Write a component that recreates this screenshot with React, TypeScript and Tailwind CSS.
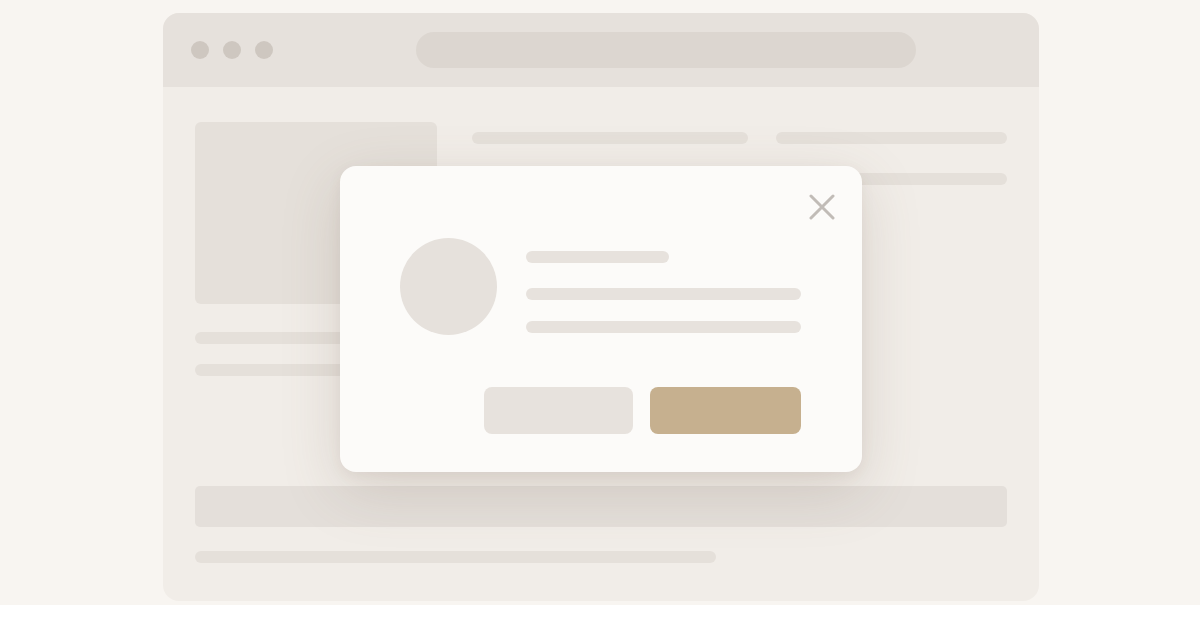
import React from "react";

export default function App() {
  return (
    <div className="w-[1200px] h-[617px] bg-white overflow-hidden" style={{ fontFamily: "'Liberation Sans', sans-serif" }}>
      <div className="h-[605px] bg-[#f8f5f1] pt-[13px] pl-[163px]">
        <div className="relative w-[876px] h-[588px] rounded-[16px] bg-[#f1ede8] overflow-visible">
          {/* header */}
          <div className="h-[74px] bg-[#e6e1dc] rounded-t-[16px] flex items-center pl-[28px]">
            <div className="flex gap-[14px]">
              <div className="w-[18px] h-[18px] rounded-full bg-[#cec7c0]" />
              <div className="w-[18px] h-[18px] rounded-full bg-[#cec7c0]" />
              <div className="w-[18px] h-[18px] rounded-full bg-[#cec7c0]" />
            </div>
            <div className="ml-[143px] w-[500px] h-[36px] rounded-full bg-[#dcd6d0]" />
          </div>
          {/* body */}
          <div className="px-[32px] pt-[35px]">
            <div className="flex gap-[35px]">
              <div className="flex flex-col">
                <div className="w-[242px] h-[182px] rounded-[6px] bg-[#e5e0da]" />
                <div className="mt-[28px] w-[242px] h-[12px] rounded-full bg-[#e5e0da]" />
                <div className="mt-[20px] w-[230px] h-[12px] rounded-full bg-[#e5e0da]" />
              </div>
              <div className="flex-1 flex flex-col pt-[10px]">
                <div className="flex gap-[28px]">
                  <div className="w-[276px] h-[12px] rounded-full bg-[#e5e0da]" />
                  <div className="flex-1 h-[12px] rounded-full bg-[#e5e0da]" />
                </div>
                <div className="mt-[29px] h-[12px] rounded-full bg-[#e5e0da]" />
              </div>
            </div>
            <div className="mt-[110px] h-[41px] rounded-[5px] bg-[#e4dfda]" />
            <div className="mt-[24px] w-[521px] h-[12px] rounded-full bg-[#e5e0da]" />
          </div>

          {/* modal */}
          <div className="absolute left-[177px] top-[153px] w-[522px] h-[306px] rounded-[16px] bg-[#fcfbf9] shadow-[0_18px_60px_rgba(110,90,70,0.18),0_4px_14px_rgba(110,90,70,0.07)]">
            <button className="absolute left-[469px] top-[28px] w-[26px] h-[26px] flex items-center justify-center" aria-label="close">
              <svg width="26" height="26" viewBox="0 0 26 26" fill="none">
                <path d="M2 2 L24 24 M24 2 L2 24" stroke="#c1bcb7" strokeWidth="3" strokeLinecap="round" />
              </svg>
            </button>
            <div className="flex pl-[60px] pt-[72px] gap-[29px]">
              <div className="w-[97px] h-[97px] rounded-full bg-[#e6e1dc]" />
              <div className="flex flex-col pt-[13px]">
                <div className="w-[143px] h-[12px] rounded-full bg-[#e7e2dd]" />
                <div className="mt-[25px] w-[275px] h-[12px] rounded-full bg-[#e7e2dd]" />
                <div className="mt-[21px] w-[275px] h-[12px] rounded-full bg-[#e7e2dd]" />
              </div>
            </div>
            <div className="flex justify-end gap-[17px] pr-[61px] mt-[52px]">
              <div className="w-[149px] h-[47px] rounded-[8px] bg-[#e7e2dd]" />
              <div className="w-[151px] h-[47px] rounded-[8px] bg-[#c6b08f]" />
            </div>
          </div>
        </div>
      </div>
    </div>
  );
}
